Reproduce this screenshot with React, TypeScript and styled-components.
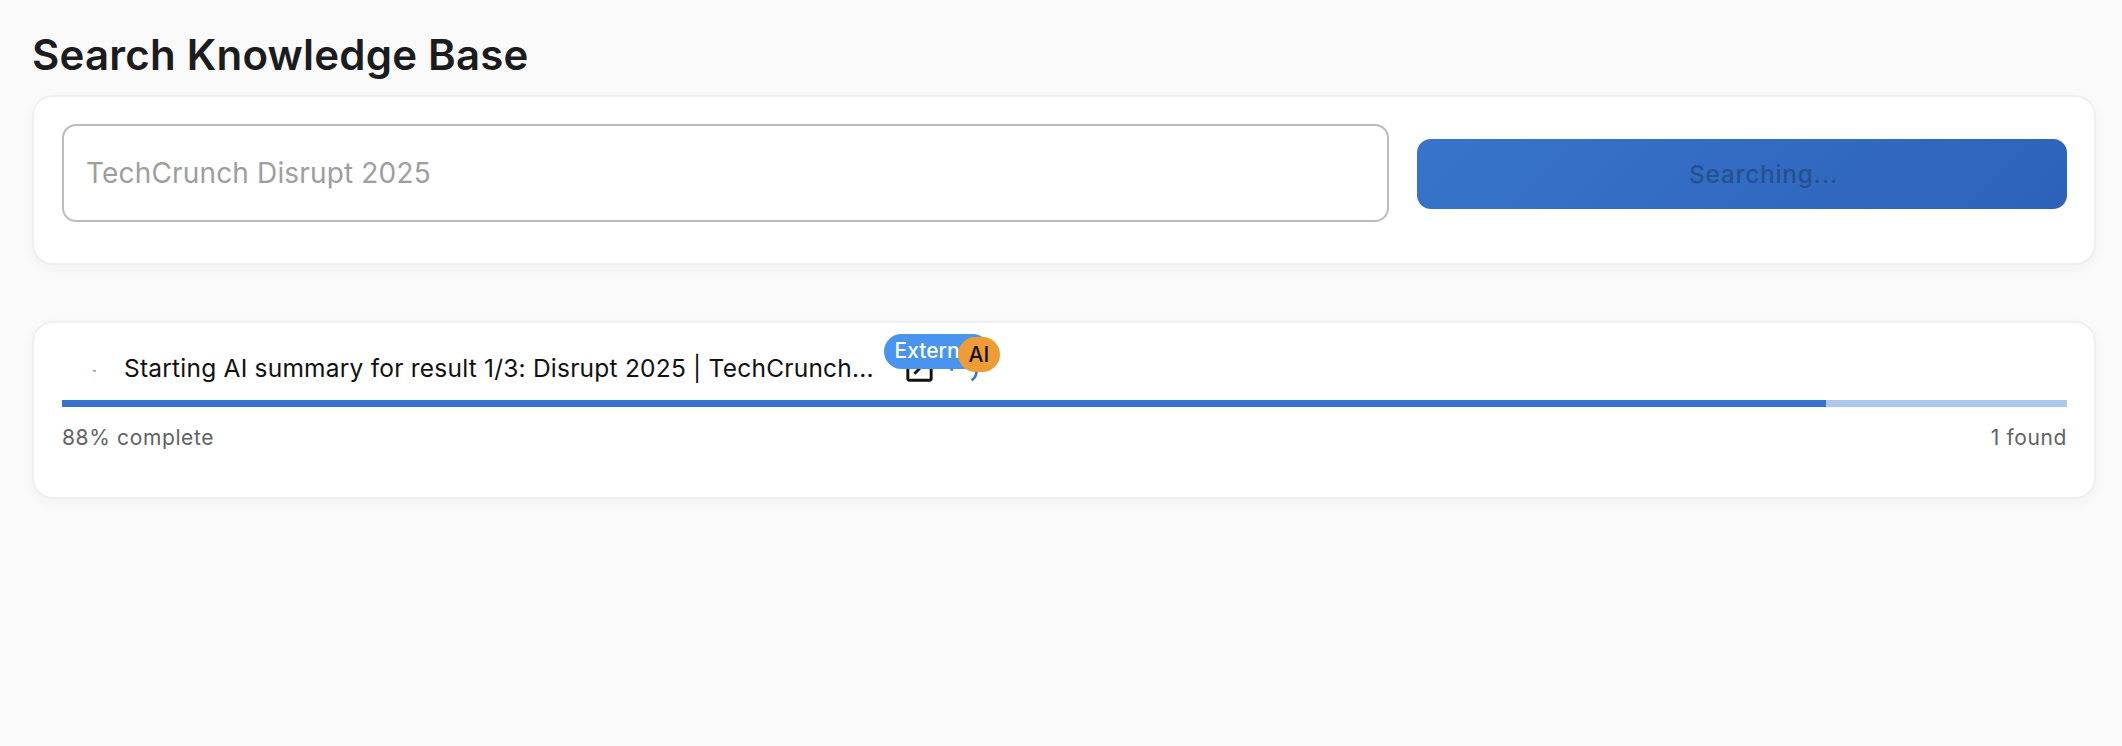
import React from "react";
import styled, { createGlobalStyle } from "styled-components";

const Global = createGlobalStyle`
  * { box-sizing: border-box; }
  body {
    margin: 0;
    background: #fafafa;
    color: #1c1c1e;
    font-family: Inter, "Liberation Sans", sans-serif;
    -webkit-font-smoothing: antialiased;
  }
`;

const Page = styled.main`
  padding: 27px 26px 0 32px;
  min-height: 746px;
`;

const Title = styled.h1`
  margin: 0 0 12px;
  font-size: 42px;
  line-height: 56px;
  font-weight: 600;
  letter-spacing: 0.22px;
`;

const Card = styled.section<{ $height: number }>`
  height: ${(p) => p.$height}px;
  padding: 28px 27px 28px 28px;
  background: #fff;
  border: 2px solid #efefef;
  border-radius: 21px;
  box-shadow: 0 4px 14px rgba(0, 0, 0, 0.04);
`;

const SearchCard = styled(Card)`
  margin-bottom: 56px;
  padding-top: 27px;
`;

const SearchRow = styled.form`
  display: grid;
  grid-template-columns: 1327px 1fr;
  gap: 28px;
  align-items: center;
`;

const SearchInput = styled.input`
  width: 100%;
  height: 98px;
  padding: 0 22px;
  border: 2px solid #bdbdbd;
  border-radius: 14px;
  background: #fff;
  font: 400 28px Inter, sans-serif;
  letter-spacing: 0.16px;
  color: #9e9e9e;
  -webkit-text-fill-color: #9e9e9e;
`;

const SearchButton = styled.button`
  height: 70px;
  margin-top: 1px;
  border: 0;
  padding: 0 0 0 43px;
  border-radius: 14px;
  background: linear-gradient(135deg, #3874cb 0%, #2d62b8 100%);
  color: #284f8f;
  font: 500 24.5px Inter, sans-serif;
  letter-spacing: 0.02857em;
`;

const StatusRow = styled.div`
  display: flex;
  align-items: center;
  height: 35px;
`;

const SpinnerSlot = styled.div`
  width: 62px;
  display: flex;
  padding: 5px 0 0 30px;
`;

const StatusText = styled.span`
  font-size: 24.5px;
  line-height: 35px;
  letter-spacing: 0.22px;
  color: #111;
  white-space: nowrap;
  width: 778px;
`;

const IconSlot = styled.div`
  position: relative;
  display: flex;
  width: 35px;
  height: 35px;
`;

const ProgressSlot = styled(IconSlot)`
  align-items: center;
  padding-left: 13px;

  svg { flex: none; }
`;

const Badge = styled.span<{ $bg: string; $fg: string }>`
  position: absolute;
  z-index: 1;
  height: 35px;
  padding: 0 10.5px;
  border-radius: 17.5px;
  background: ${(p) => p.$bg};
  color: ${(p) => p.$fg};
  font-size: 21px;
  line-height: 34px;
  font-weight: 500;
`;

const ExternalBadge = styled(Badge)`
  left: -18px;
  top: -17px;
  padding-right: 13px;
`;

const AiBadge = styled(Badge)`
  left: 21px;
  top: -14px;
  line-height: 35px;
`;

const Track = styled.div`
  height: 7px;
  margin-top: 14px;
  background: #adc8ea;
`;

const Fill = styled.div`
  height: 100%;
  background: #3673cc;
`;

const Meta = styled.div`
  display: flex;
  justify-content: space-between;
  margin-top: 13px;
  font-size: 21px;
  line-height: 35px;
  letter-spacing: 0.63px;
  color: #626262;
`;

export default function App() {
  const progress = 88;
  return (
    <>
      <Global />
      <Page>
        <Title>Search Knowledge Base</Title>
        <SearchCard $height={170}>
          <SearchRow>
            <SearchInput defaultValue="TechCrunch Disrupt 2025" disabled />
            <SearchButton type="button" disabled>Searching...</SearchButton>
          </SearchRow>
        </SearchCard>
        <Card $height={178}>
          <StatusRow>
            <SpinnerSlot>
              <svg width="5" height="4" viewBox="0 0 5 4">
                <path d="M1 1.5 L4 2.3" stroke="#6f9fe0" strokeWidth="1.5" />
              </svg>
            </SpinnerSlot>
            <StatusText>Starting AI summary for result 1/3: Disrupt 2025 | TechCrunch...</StatusText>
            <IconSlot>
              <svg width="35" height="35" viewBox="0 0 24 24" fill="#111">
                <path d="M19 19H5V5h7V3H5c-1.11 0-2 .9-2 2v14c0 1.1.89 2 2 2h14c1.1 0 2-.9 2-2v-7h-2v7zM14 3v2h3.59l-9.83 9.83 1.41 1.41L19 6.41V10h2V3h-7z" />
              </svg>
              <ExternalBadge $bg="#4894ee" $fg="#fff">External</ExternalBadge>
            </IconSlot>
            <ProgressSlot>
              <svg width="28" height="28" viewBox="0 0 28 28" fill="none">
                <path d="M1.6 15.8 A12.5 12.5 0 1 1 21.6 25.4" stroke="#3673cc" strokeWidth="2.6" />
              </svg>
              <AiBadge $bg="#f09c36" $fg="#111">AI</AiBadge>
            </ProgressSlot>
          </StatusRow>
          <Track>
            <Fill style={{ width: `${progress}%` }} />
          </Track>
          <Meta>
            <span>{progress}% complete</span>
            <span>1 found</span>
          </Meta>
        </Card>
      </Page>
    </>
  );
}
